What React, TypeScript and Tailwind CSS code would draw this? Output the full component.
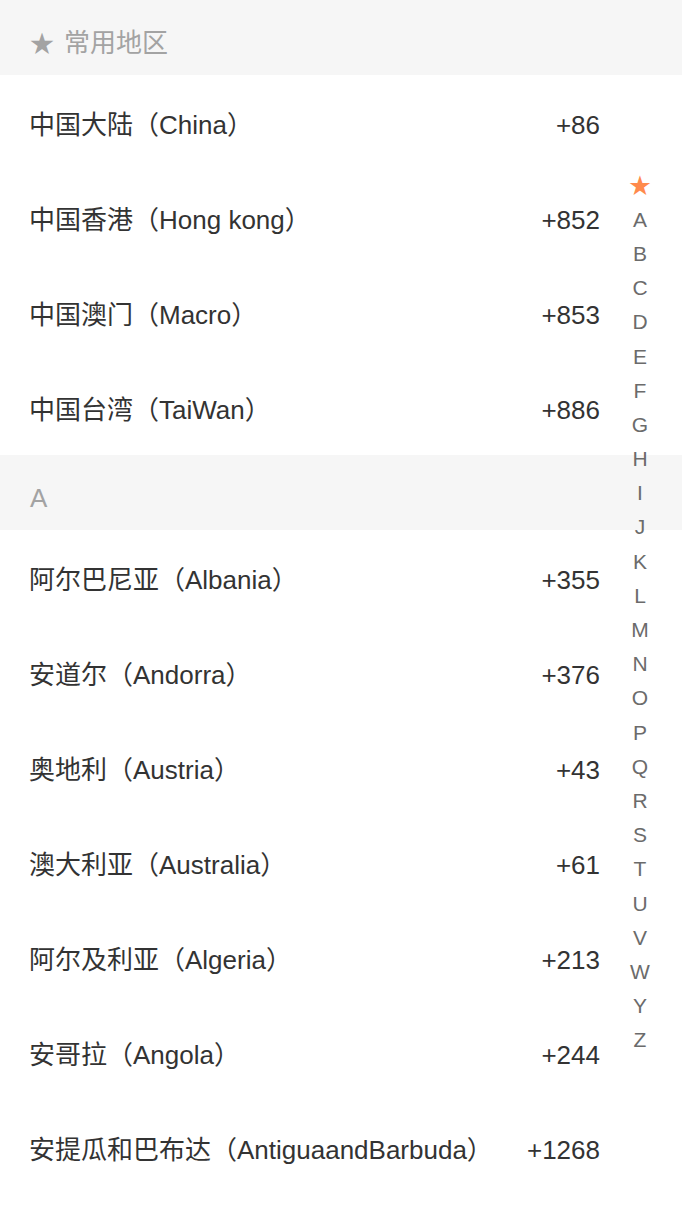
import React from "react";

type Country = { name: string; code: string };

const common: Country[] = [
  { name: "中国大陆（China）", code: "+86" },
  { name: "中国香港（Hong kong）", code: "+852" },
  { name: "中国澳门（Macro）", code: "+853" },
  { name: "中国台湾（TaiWan）", code: "+886" },
];

const groupA: Country[] = [
  { name: "阿尔巴尼亚（Albania）", code: "+355" },
  { name: "安道尔（Andorra）", code: "+376" },
  { name: "奥地利（Austria）", code: "+43" },
  { name: "澳大利亚（Australia）", code: "+61" },
  { name: "阿尔及利亚（Algeria）", code: "+213" },
  { name: "安哥拉（Angola）", code: "+244" },
  { name: "安提瓜和巴布达（AntiguaandBarbuda）", code: "+1268" },
];

const letters = "ABCDEFGHIJKLMNOPQRSTUVWYZ".split("");

function SectionHeader({ children }: { children: React.ReactNode }) {
  return (
    <div className="flex h-[75px] items-center bg-[#f6f6f6] pl-[30px] pt-[12px] text-[26px] text-[#a3a3a3]">
      {children}
    </div>
  );
}

function Row({ c }: { c: Country }) {
  return (
    <div className="flex h-[95px] items-center justify-between pl-[29px] pr-[82px] pt-[5px] text-[26px] text-[#333]">
      <span>{c.name}</span>
      <span>{c.code}</span>
    </div>
  );
}

export default function App() {
  return (
    <div
      className="relative h-[1210px] w-[682px] overflow-hidden bg-white"
      style={{ fontFamily: '"Liberation Sans", "Noto Sans CJK SC", sans-serif' }}
    >
      <SectionHeader>
        <span className="mr-[10px] text-[24px]">★</span>常用地区
      </SectionHeader>
      {common.map((c) => (
        <Row key={c.name} c={c} />
      ))}
      <SectionHeader>A</SectionHeader>
      {groupA.map((c) => (
        <Row key={c.name} c={c} />
      ))}

      {/* 字母索引 */}
      <div className="absolute right-[28px] top-[168px] flex w-[28px] flex-col items-center text-[21px] text-[#6b6b6b]">
        <span className="flex h-[34.2px] items-center text-[22px] text-[#ff8a4c]">★</span>
        {letters.map((l) => (
          <span key={l} className="flex h-[34.2px] items-center leading-none">
            {l}
          </span>
        ))}
      </div>
    </div>
  );
}
